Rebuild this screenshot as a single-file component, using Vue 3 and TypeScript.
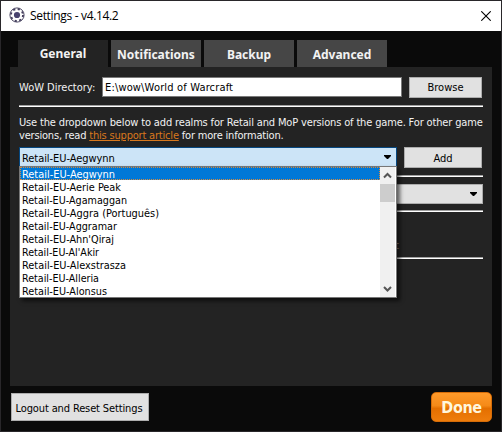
<script setup lang="ts">
import { ref } from 'vue'

const tabs = ['General', 'Notifications', 'Backup', 'Advanced']
const activeTab = ref('General')
const directory = ref('E:\\wow\\World of Warcraft')
const realms = [
  { name: 'Retail-EU-Aegwynn', width: 93 },
  { name: 'Retail-EU-Aerie Peak', width: 99 },
  { name: 'Retail-EU-Agamaggan', width: 105 },
  { name: 'Retail-EU-Aggra (Português)', width: 137 },
  { name: 'Retail-EU-Aggramar', width: 95 },
  { name: "Retail-EU-Ahn'Qiraj", width: 92 },
  { name: "Retail-EU-Al'Akir", width: 77 },
  { name: 'Retail-EU-Alexstrasza', width: 104 },
  { name: 'Retail-EU-Alleria', width: 77 },
  { name: 'Retail-EU-Alonsus', width: 85 },
]
const selected = ref(realms[0].name)
</script>

<template>
  <div class="window">
    <header class="titlebar">
      <svg class="gear" width="16" height="16" viewBox="0 0 16 16">
        <circle cx="8" cy="8" r="7.1" fill="#fff" stroke="#55506a" stroke-width="1" />
        <circle cx="8" cy="8" r="6" fill="none" stroke="#46405f" stroke-width="1.9" stroke-dasharray="2.2 2.512" />
        <circle cx="8" cy="8" r="3.1" fill="#49436f" />
      </svg>
      <span class="title">Settings - v4.14.2</span>
      <svg class="close" width="10" height="10" viewBox="0 0 10 10">
        <path d="M0.3 0.3L9.7 9.7M9.7 0.3L0.3 9.7" stroke="#000" stroke-width="1.1" />
      </svg>
    </header>

    <main class="body">
      <nav class="tabs">
        <div v-for="tab in tabs" :key="tab" class="tab" :class="{ active: tab === activeTab }" @click="activeTab = tab">{{ tab }}</div>
      </nav>
      <section class="panel">
        <div class="row directory">
          <span class="label">WoW Directory:</span>
          <div class="field"><span>{{ directory }}</span></div>
          <div class="button browse"><span>Browse</span></div>
        </div>
        <div class="rule first"></div>
        <div class="help">
          <div class="line-a">Use the dropdown below to add realms for Retail and MoP versions of the game. For other game</div>
          <div class="line-b">versions, read <a>this support article</a> for more information.</div>
        </div>
        <div class="row realm">
          <div class="combo">
            <span class="value">{{ selected }}</span>
            <svg width="7" height="4" viewBox="0 0 7 4"><path d="M0 0H7V1L4 4H3L0 1Z" fill="#000" /></svg>
            <div class="menu">
              <div class="options">
                <div v-for="realm in realms" :key="realm.name" class="option" :class="{ chosen: realm.name === selected }">
                  <svg class="option-text" height="13" width="350"><text x="2" y="11" :textLength="realm.width" lengthAdjust="spacingAndGlyphs">{{ realm.name }}</text></svg>
                </div>
              </div>
              <div class="scrollbar">
                <svg width="15" height="17" viewBox="0 0 15 17"><path d="M4 10.5L7.5 7L11 10.5" fill="none" stroke="#555" stroke-width="2" /></svg>
                <div class="thumb"></div>
                <svg width="15" height="17" viewBox="0 0 15 17"><path d="M4 7L7.5 10.5L11 7" fill="none" stroke="#555" stroke-width="2" /></svg>
              </div>
            </div>
          </div>
          <div class="button add"><span>Add</span></div>
        </div>
        <div class="rule second"></div>
        <div class="select">
          <svg width="7" height="4" viewBox="0 0 7 4"><path d="M0 0H7V1L4 4H3L0 1Z" fill="#000" /></svg>
        </div>
        <div class="rule third"></div>
        <div class="note">t</div>
        <div class="rule fourth"></div>
      </section>
      <footer class="footer">
        <div class="button logout"><span>Logout and Reset Settings</span></div>
        <div class="done">Done</div>
      </footer>
    </main>
  </div>
</template>

<style>
body { margin: 0; overflow: hidden; }
</style>

<style scoped>
.window {
  box-sizing: border-box;
  width: 502px;
  height: 432px;
  border: 1px solid #29272a;
  background: #0a0a0a;
  color: #f2f2f2;
  font: 11px/13px "DejaVu Sans Condensed", "DejaVu Sans", sans-serif;
  font-stretch: condensed;
  white-space: nowrap;
}
.titlebar {
  box-sizing: border-box;
  display: flex;
  align-items: center;
  height: 30px;
  padding: 0 10px 0 8px;
  background: #fff;
  color: #000;
}
.gear { margin-top: -2px; }
.title { margin-left: 5px; font: 12px/16px "Open Sans", "Noto Sans", sans-serif; letter-spacing: -0.33px; }
.close { margin-left: auto; margin-top: -1px; }
.body { padding: 9px 9px 0; }
.tabs { display: flex; gap: 3px; padding-left: 8px; }
.tab {
  width: 90px;
  height: 27px;
  background: #464646;
  text-align: center;
  font: bold 12px/30px "Noto Sans", sans-serif;
}
.tab.active { background: #232323; line-height: 28px; }
.panel {
  box-sizing: border-box;
  width: 482px;
  height: 319px;
  padding: 10px 9px 0;
  background: #232323;
}
.row { display: flex; align-items: flex-start; height: 21px; }
.label { width: 83px; line-height: 22px; }
.field {
  box-sizing: border-box;
  width: 300px;
  height: 20px;
  padding: 0 2px;
  border: 1px solid #7a7a7a;
  background: #fff;
  color: #000;
  line-height: 19px;
  letter-spacing: 0.16px;
}
.button {
  box-sizing: border-box;
  height: 21px;
  border: 1px solid #adadad;
  background: #e1e1e1;
  color: #000;
  text-align: center;
  line-height: 20px;
}
.browse { width: 73px; margin-left: 7px; }
.rule {
  box-sizing: border-box;
  width: 464px;
  height: 2px;
  border-top: 1px solid #a0a0a0;
  background: #fff;
}
.rule.first { margin-top: 7px; }
.help { height: 26px; margin-top: 9px; }
.line-a { letter-spacing: -0.152px; }
.line-b { letter-spacing: -0.19px; }
a { color: #d9781d; text-decoration: underline; }
.realm { margin-top: 5px; }
.combo {
  position: relative;
  box-sizing: border-box;
  display: flex;
  align-items: center;
  justify-content: space-between;
  width: 378px;
  height: 20px;
  padding: 0 5px 0 2px;
  border: 1px solid #06477f;
  background: #cce4f7;
  color: #000;
}
.value { padding-top: 2px; letter-spacing: -0.06px; }
.menu {
  position: absolute;
  z-index: 1;
  top: 18px;
  left: -1px;
  box-sizing: border-box;
  display: flex;
  width: 378px;
  height: 132px;
  border: 1px solid #777;
  background: #fff;
  box-shadow: 3px 3px 4px rgba(0, 0, 0, 0.6);
}
.options { flex: 1; }
.option { box-sizing: border-box; height: 13px; }
.option.chosen {
  outline: 1px dotted #d78b3d;
  outline-offset: -1px;
  background: #0078d7;
  color: #fff;
}
.option-text { display: block; fill: currentColor; }
.scrollbar { display: flex; flex-direction: column; width: 15px; margin-right: 1px; background: #f0f0f0; }
.scrollbar svg:last-child { margin-top: auto; }
.thumb { height: 18px; background: #cdcdcd; }
.add { width: 78px; margin-left: 7px; line-height: 22px; }
.rule.second { margin-top: 7px; }
.select {
  box-sizing: border-box;
  display: flex;
  align-items: center;
  justify-content: flex-end;
  width: 464px;
  height: 20px;
  margin-top: 7px;
  padding-right: 5px;
  border: 1px solid #adadad;
  background: #e1e1e1;
}
.rule.third { margin-top: 6px; }
.note { width: 380px; height: 13px; margin-top: 27px; color: #b09e96; text-align: right; }
.rule.fourth { margin-top: 5px; }
.footer { display: flex; justify-content: space-between; align-items: flex-start; padding: 6px 0 0 1px; }
.logout { width: 138px; height: 28px; margin-top: 1px; padding-right: 2px; line-height: 29px; letter-spacing: -0.13px; }
.done {
  box-sizing: border-box;
  width: 61px;
  height: 30px;
  border: 1px solid #d56c08;
  border-radius: 5px;
  background: linear-gradient(#ff9a2a, #f58a18 45%, #e46f00 55%, #ee7d0c);
  color: #fff6dc;
  text-align: center;
  font: bold 16px/30px "DejaVu Sans Condensed", "DejaVu Sans", sans-serif;
  font-stretch: condensed;
  letter-spacing: -0.4px;
}
</style>
